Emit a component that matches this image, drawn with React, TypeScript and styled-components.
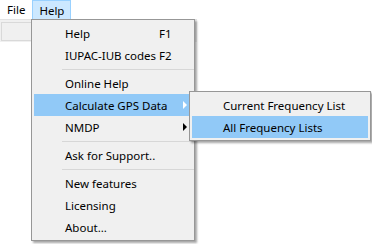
import React from "react";
import styled, { createGlobalStyle, css } from "styled-components";

const Global = createGlobalStyle`
  html, body { margin: 0; padding: 0; background: #ffffff; }
  body {
    width: 372px; height: 244px; overflow: hidden;
    font-family: "Noto Sans", "Open Sans", sans-serif;
    font-size: 11.5px; color: #000;
  }
`;

const Window = styled.div`
  position: relative;
  width: 372px;
  height: 244px;
  background: #ffffff;
  overflow: hidden;
`;

const MenuBar = styled.div`
  display: flex;
  height: 19px;
  background: #ffffff;
`;

const BarItem = styled.div<{ $open?: boolean }>`
  display: flex;
  align-items: center;
  padding: 0 7px;
  height: 19px;
  box-sizing: border-box;
  ${(p) =>
    p.$open &&
    css`
      background: #cce8ff;
      border: 1px solid #99d1ff;
      border-bottom: none;
      padding: 0 6px;
    `}
`;

const ToolStrip = styled.div`
  width: 197px;
  height: 23px;
  background: #f0f0f0;
  border-top: 1px solid #e3e3e3;
  box-sizing: border-box;
  padding: 2px 0 0 1px;
`;

const ComboBox = styled.div`
  width: 190px;
  height: 19px;
  box-sizing: border-box;
  border: 1px solid #d9d9d9;
  background: #f0f0f0;
`;

const Menu = styled.div<{ $left: number; $top: number; $width: number }>`
  position: absolute;
  left: ${(p) => p.$left}px;
  top: ${(p) => p.$top}px;
  width: ${(p) => p.$width}px;
  box-sizing: border-box;
  background: #f0f0f0;
  border: 1px solid #979797;
  padding: 2px 0;
  box-shadow: 2px 2px 2px rgba(0, 0, 0, 0.35);
  display: flex;
  flex-direction: column;
`;

const Item = styled.div<{ $hot?: boolean }>`
  position: relative;
  display: flex;
  align-items: center;
  height: 22px;
  margin: 0 2px;
  padding-left: 31px;
  background: ${(p) => (p.$hot ? "#91c9f7" : "transparent")};
  white-space: nowrap;
`;

const Label = styled.span`
  display: block;
  width: 94px;
  flex: none;
`;

const Shortcut = styled.span`
  display: block;
`;

const Arrow = styled.span<{ $white?: boolean }>`
  position: absolute;
  right: 5px;
  top: 7px;
  width: 0;
  height: 0;
  border-top: 4px solid transparent;
  border-bottom: 4px solid transparent;
  border-left: 4px solid ${(p) => (p.$white ? "#ffffff" : "#000000")};
`;

const Separator = styled.div`
  height: 6px;
  margin-left: 30px;
  display: flex;
  align-items: center;
  &::after {
    content: "";
    display: block;
    width: 100%;
    height: 1px;
    background: #d7d7d7;
  }
`;

export default function App() {
  return (
    <Window>
      <Global />
      <MenuBar>
        <BarItem>File</BarItem>
        <BarItem $open>Help</BarItem>
      </MenuBar>
      <ToolStrip>
        <ComboBox />
      </ToolStrip>

      <Menu $left={31} $top={19} $width={164}>
        <Item>
          <Label>Help</Label>
          <Shortcut>F1</Shortcut>
        </Item>
        <Item>
          <Label>IUPAC-IUB codes</Label>
          <Shortcut>F2</Shortcut>
        </Item>
        <Separator />
        <Item>Online Help</Item>
        <Item $hot>
          Calculate GPS Data
          <Arrow $white />
        </Item>
        <Item>
          NMDP
          <Arrow />
        </Item>
        <Separator />
        <Item>Ask for Support..</Item>
        <Separator />
        <Item>New features</Item>
        <Item>Licensing</Item>
        <Item>About...</Item>
      </Menu>

      <Menu $left={189} $top={91} $width={182}>
        <Item>Current Frequency List</Item>
        <Item $hot>All Frequency Lists</Item>
      </Menu>
    </Window>
  );
}
